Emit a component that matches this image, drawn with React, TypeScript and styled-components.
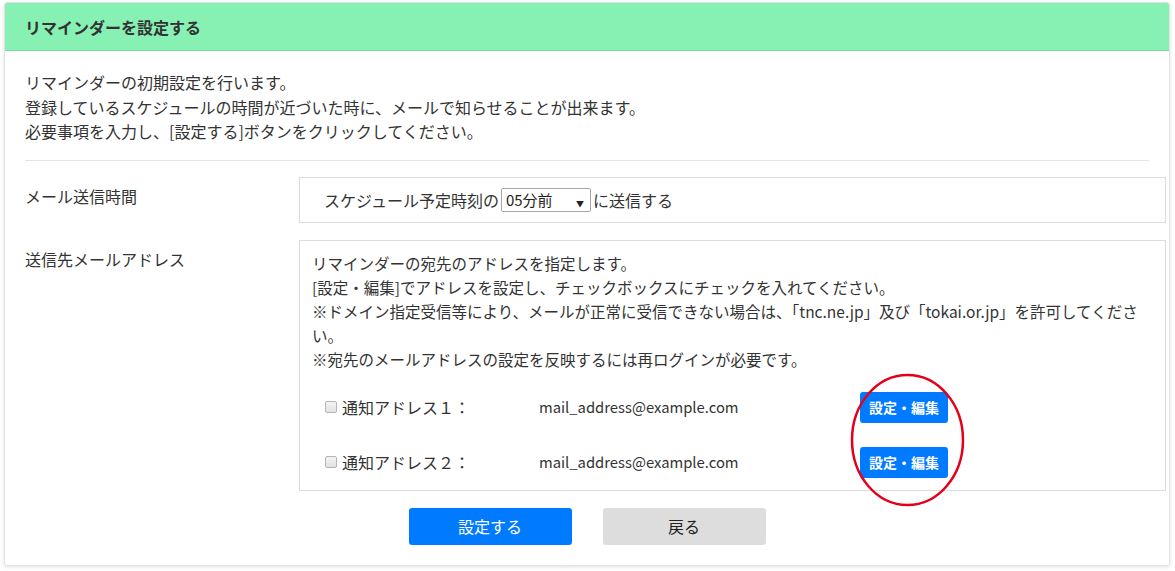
import { FC } from "react";
import styled, { createGlobalStyle } from "styled-components";

const GlobalStyle = createGlobalStyle`
  html, body {
    margin: 0;
    padding: 0;
    background: #fff;
  }
  body {
    font-family: "Noto Sans CJK JP", "Noto Sans", sans-serif;
    color: #333;
    font-size: 16px;
  }
`;

const Page = styled.div`
  padding: 2px 5px 6px 4px;
`;

const Card = styled.section`
  border: 1px solid #e2e2e2;
  border-radius: 3px;
  box-shadow: 0 1px 4px rgba(0, 0, 0, 0.12);
  overflow: hidden;
`;

const Header = styled.h2`
  margin: 0;
  height: 47px;
  display: flex;
  align-items: center;
  padding: 0 20px;
  background: #87f1b4;
  border-bottom: 1px solid #79d9a2;
  font-size: 16px;
  font-weight: 700;
  color: #333;
`;

const Body = styled.div`
  padding: 19px 3px 20px 20px;
`;

const Intro = styled.p`
  margin: 0 17px 0 0;
  line-height: 24.5px;
`;

const Rule = styled.hr`
  border: 0;
  border-top: 1px solid #e3e3e3;
  margin: 16px 17px 16px 0;
`;

const Row = styled.div`
  display: grid;
  grid-template-columns: 274px 1fr;
  & + & {
    margin-top: 17px;
  }
`;

const Label = styled.div`
  padding-top: 7px;
  line-height: 24px;
`;

const Box = styled.div<{ $pad?: string }>`
  position: relative;
  border: 1px solid #dcdcdc;
  padding: ${(p) => p.$pad ?? "12px"};
  line-height: 24px;
`;

const TimeLine = styled.div`
  display: flex;
  align-items: center;
  height: 44px;
`;

const SelectWrap = styled.span`
  position: relative;
  display: inline-block;
  margin: 0 2px;
  &::after {
    content: "▼";
    position: absolute;
    right: 7px;
    top: 5px;
    font-size: 8px;
    color: #222;
    pointer-events: none;
  }
`;

const Select = styled.select`
  appearance: none;
  width: 90px;
  height: 24px;
  padding: 0 0 0 4px;
  border: 1px solid #a6a6a6;
  border-radius: 2px;
  background: #fff;
  font-family: inherit;
  font-size: 15px;
  color: #222;
`;

const Note = styled.p`
  margin: 0;
  font-size: 15.5px;
  line-height: 24px;
`;

const AddrList = styled.div`
  margin-top: 9px;
`;

const AddrRow = styled.div`
  display: flex;
  align-items: center;
  height: 55px;
  padding-left: 13px;
`;

const Check = styled.input`
  appearance: none;
  width: 12px;
  height: 12px;
  margin: 0 5px 0 0;
  border: 1px solid #b5b5b5;
  border-radius: 2px;
  background: linear-gradient(#f4f4f4, #e2e2e2);
`;

const AddrName = styled.span`
  width: 197px;
`;

const AddrMail = styled.span`
  width: 321px;
  font-size: 14.8px;
`;

const SmallButton = styled.button`
  height: 31px;
  padding: 0 9px;
  border: 0;
  border-radius: 3px;
  background: #007bff;
  color: #fff;
  font-family: inherit;
  font-size: 14px;
  font-weight: 700;
`;

const Highlight = styled.svg`
  position: absolute;
  left: 550px;
  top: 132px;
  pointer-events: none;
`;

const Actions = styled.div`
  display: flex;
  justify-content: center;
  gap: 31px;
  margin: 17px 17px 0 0;
`;

const ActionButton = styled.button<{ $primary?: boolean }>`
  width: 163px;
  height: 37px;
  border: 0;
  border-radius: 3px;
  background: ${(p) => (p.$primary ? "#007bff" : "#dddddd")};
  color: ${(p) => (p.$primary ? "#fff" : "#222")};
  font-family: inherit;
  font-size: 16px;
`;

const addresses = [
  { name: "通知アドレス１：", mail: "mail_address@example.com" },
  { name: "通知アドレス２：", mail: "mail_address@example.com" },
];

const App: FC = () => (
  <Page>
    <GlobalStyle />
    <Card>
      <Header>リマインダーを設定する</Header>
      <Body>
        <Intro>
          リマインダーの初期設定を行います。
          <br />
          登録しているスケジュールの時間が近づいた時に、メールで知らせることが出来ます。
          <br />
          必要事項を入力し、[設定する]ボタンをクリックしてください。
        </Intro>
        <Rule />

        <Row>
          <Label>メール送信時間</Label>
          <Box $pad="0 24px">
            <TimeLine>
              スケジュール予定時刻の
              <SelectWrap>
                <Select defaultValue="05">
                  <option value="05">05分前</option>
                  <option value="10">10分前</option>
                  <option value="15">15分前</option>
                  <option value="30">30分前</option>
                </Select>
              </SelectWrap>
              に送信する
            </TimeLine>
          </Box>
        </Row>

        <Row>
          <Label>送信先メールアドレス</Label>
          <Box $pad="10px 12px 0">
            <Note>
              リマインダーの宛先のアドレスを指定します。
              <br />
              [設定・編集]でアドレスを設定し、チェックボックスにチェックを入れてください。
              <br />
              ※ドメイン指定受信等により、メールが正常に受信できない場合は、「tnc.ne.jp」及び「tokai.or.jp」を許可してください。
              <br />
              ※宛先のメールアドレスの設定を反映するには再ログインが必要です。
            </Note>
            <AddrList>
              {addresses.map((a) => (
                <AddrRow key={a.name}>
                  <Check type="checkbox" />
                  <AddrName>{a.name}</AddrName>
                  <AddrMail>{a.mail}</AddrMail>
                  <SmallButton>設定・編集</SmallButton>
                </AddrRow>
              ))}
            </AddrList>
            <Highlight width="115" height="134" viewBox="0 0 115 134">
              <ellipse cx="57.5" cy="67" rx="55.5" ry="65" fill="none" stroke="#e3001b" strokeWidth="2.5" />
            </Highlight>
          </Box>
        </Row>

        <Actions>
          <ActionButton $primary>設定する</ActionButton>
          <ActionButton>戻る</ActionButton>
        </Actions>
      </Body>
    </Card>
  </Page>
);

export default App;
